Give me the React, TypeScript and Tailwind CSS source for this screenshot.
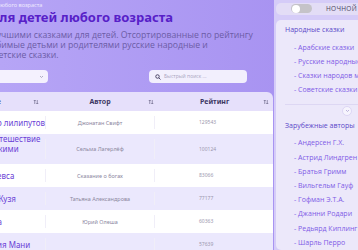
import React from 'react';

const rows = [
  { title: 'Королевство лилипутов', author: 'Джонатан Свифт', rating: '129543' },
  { title: 'Чудесное путешествие\nНильса с дикими гусями', author: 'Сельма Лагерлёф', rating: '100124' },
  { title: 'Дети бога Зевса', author: 'Сказание о богах', rating: '83066' },
  { title: 'Домовёнок Кузя', author: 'Татьяна Александрова', rating: '77177' },
  { title: 'Три толстяка', author: 'Юрий Олеша', rating: '60363' },
  { title: 'Приключения Мани', author: '', rating: '57639' },
];

const folk = ['Арабские сказки', 'Русские народные сказки', 'Сказки народов мира', 'Советские сказки'];
const foreign = [
  'Андерсен Г.Х.',
  'Астрид Линдгрен',
  'Братья Гримм',
  'Вильгельм Гауф',
  'Гофман Э.Т.А.',
  'Джанни Родари',
  'Редьярд Киплинг',
  'Шарль Перро',
];

function SortIcon() {
  return (
    <svg width="6" height="6" viewBox="0 0 12 12" fill="none" stroke="#6f6a8c" strokeWidth="1.4">
      <path d="M3.5 10V2M1.5 4l2-2 2 2" />
      <path d="M8.5 2v8M6.5 8l2 2 2-2" />
    </svg>
  );
}

export default function App() {
  return (
    <div className="w-[358px] h-[250px] overflow-hidden flex bg-gradient-to-r from-[#b6a5f6] to-[#a48ef0]">
      {/* main column, starts off-screen on the left */}
      <div className="ml-[-60px] w-[333px] shrink-0 flex flex-col">
        <div className="ml-[-17px] mt-[2px] text-[5.5px] leading-[7px] text-white/80 font-['Open_Sans',sans-serif] whitespace-nowrap">
          Главная / Сказки для детей любого возраста
        </div>
        <h1 className="text-[13px] leading-[16px] font-bold text-[#5720c8] font-['Noto_Sans',sans-serif] whitespace-nowrap">
          Сказки для детей любого возраста
        </h1>
        <p className="ml-[44px] mt-[5px] text-[8.7px] leading-[10px] text-[#6c5ca6] font-['Open_Sans',sans-serif] whitespace-nowrap">
          С лучшими сказками для детей. Отсортированные по рейтингу
          <br />
          любимые детьми и родителями русские народные и
          <br />
          советские сказки.
        </p>

        <div className="mt-[10px] h-[14px] flex items-center">
          <div className="w-[108px] h-full rounded-[4px] bg-[#f4f1fe] flex items-center justify-end pr-[4px]">
            <svg width="5" height="5" viewBox="0 0 10 10" fill="none" stroke="#9a95b0" strokeWidth="1.5">
              <path d="M2 4l3 3 3-3" />
            </svg>
          </div>
          <div className="ml-[101px] w-[98px] h-full rounded-[4px] bg-[#f2effd] flex items-center pl-[6px] gap-[3px]">
            <svg width="6" height="6" viewBox="0 0 12 12" fill="none" stroke="#3f3a5c" strokeWidth="1.8">
              <circle cx="5" cy="5" r="3.5" />
              <path d="M7.7 7.7L11 11" />
            </svg>
            <span className="text-[5px] text-[#a9a5bf] font-['Open_Sans',sans-serif]">Быстрый поиск ...</span>
          </div>
        </div>

        <div className="mt-[9px] rounded-tr-[6px] overflow-hidden font-['Noto_Sans',sans-serif]">
          <div className="h-[19px] bg-[#e6e0fb] flex items-center text-[7px] font-bold text-[#3d3763]">
            <div className="w-[105px] flex items-center justify-between pl-[26px] pr-[6px]">
              <span>Название</span>
              <SortIcon />
            </div>
            <div className="w-[110px] flex items-center justify-center relative">
              <span>Автор</span>
              <span className="absolute right-[1px] top-1/2 -translate-y-1/2 flex">
                <SortIcon />
              </span>
            </div>
            <div className="flex-1 flex items-center justify-between pl-[45px] pr-[4px]">
              <span>Рейтинг</span>
              <SortIcon />
            </div>
          </div>
          {rows.map((r, i) => (
            <div
              key={r.rating}
              className={`${i === 1 ? 'h-[30px]' : 'h-[23px]'} ${i % 2 === 0 ? 'bg-white' : 'bg-[#ebe8fd]'} flex items-center`}
            >
              <div className="w-[105px] pl-[12px] text-[8px] leading-[10px] text-[#6a3fd6] whitespace-pre-line">
                {r.title}
              </div>
              <div className="w-[110px] self-stretch py-[5px]">
                <div className="h-full border-x border-[#f0eef8] flex items-center justify-center text-[5.5px] text-[#8d889f]">
                  {r.author}
                </div>
              </div>
              <div className="flex-1 pl-[44px] text-[5px] text-[#9c98ae]">{r.rating}</div>
            </div>
          ))}
        </div>
      </div>

      {/* sidebar */}
      <div className="ml-[1px] w-[144px] shrink-0 bg-[#d5ccf8] pl-[2px] pt-[3px] flex flex-col gap-[5px] font-['Open_Sans',sans-serif]">
        <div className="h-[19px] rounded-[5px] bg-[#e3ddf6] flex items-center pl-[15px]">
          <div className="w-[21px] h-[9px] rounded-full bg-[#c5c3c8] flex items-center pl-[1px]">
            <div className="w-[8px] h-[8px] rounded-full bg-white" />
          </div>
          <span className="ml-[14px] text-[6.5px] text-[#4a4560] tracking-[0.3px]">НОЧНОЙ РЕЖИМ</span>
        </div>
        <div className="flex-1 rounded-[5px] bg-[#ece8fa] pl-[9px] pt-[4px] text-[7px] leading-[14.2px] whitespace-nowrap">
          <div className="text-[#5b48c9] leading-[12px]">Народные сказки</div>
          <div className="pl-[9px] pt-[5px] text-[#7f5be6]">
            {folk.map((f) => (
              <div key={f}>- {f}</div>
            ))}
          </div>
          <div className="mt-[7px] mr-[9px] h-px bg-[#ddd7f3]" />
          <div className="h-[11px] mr-[9px] flex items-center justify-center">
            <div className="w-[10px] h-[10px] rounded-full bg-[#f6f4fd] border border-[#ddd6f5] flex items-center justify-center">
              <svg width="5" height="5" viewBox="0 0 10 10" fill="none" stroke="#a89fd0" strokeWidth="1.5">
                <path d="M2 4l3 3 3-3" />
              </svg>
            </div>
          </div>
          <div className="text-[#5b48c9] leading-[12px] mt-[4px]">Зарубежные авторы</div>
          <div className="pl-[9px] pt-[4px] text-[#7f5be6]">
            {foreign.map((f) => (
              <div key={f}>- {f}</div>
            ))}
          </div>
        </div>
      </div>
    </div>
  );
}
